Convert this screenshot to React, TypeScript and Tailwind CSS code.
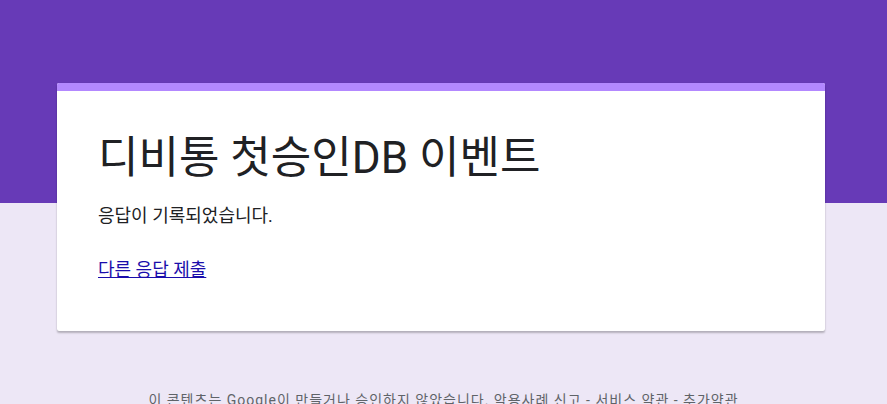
import React from 'react';

const fontStack = { fontFamily: 'Roboto, "Noto Sans CJK KR", sans-serif' };

const App: React.FC = () => {
  return (
    <div
      className="min-h-screen w-full bg-[linear-gradient(#673ab7_203px,#ede7f6_203px)] pt-[83px]"
      style={fontStack}
    >
      <div className="ml-[57px] w-[768px] overflow-hidden rounded-[2px] bg-white shadow-[0_2px_2px_rgba(0,0,0,0.24),0_0_1px_rgba(0,0,0,0.12)]">
        <div className="h-[8px] bg-[#b388ff]"></div>
        <div className="pl-[41px] pr-10 pt-[41px] pb-[48px]">
          <h1 className="text-[44px] leading-[52px] text-[#202124] font-normal">
            디비통 첫승인DB 이벤트
          </h1>
          <p className="mt-[20px] text-[18px] leading-[24px] text-[#202124]">응답이 기록되었습니다.</p>
          <a
            href="#"
            className="mt-[30px] inline-block text-[18px] leading-[24px] text-[#1a0dab] underline"
          >
            다른 응답 제출
          </a>
        </div>
      </div>
      <div className="mt-[59px] text-center text-[14px] leading-[20px] tracking-[1px] text-[#5f6368]">
        이 콘텐츠는 Google이 만들거나 승인하지 않았습니다. 악용사례 신고 - 서비스 약관 - 추가약관
      </div>
    </div>
  );
};

export default App;
